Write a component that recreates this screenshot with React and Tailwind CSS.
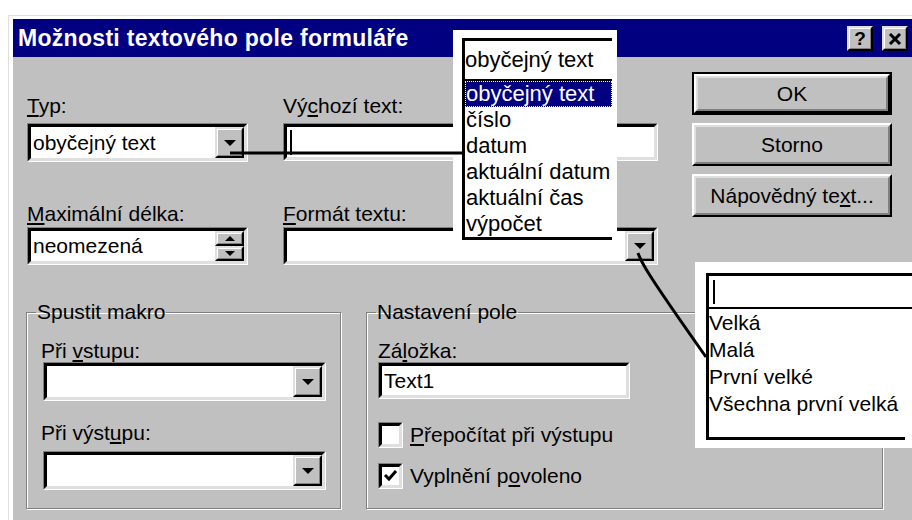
import React from "react";

const FONT = "font-['Liberation_Sans',Arial,sans-serif]";

// Sunken white edit area (Win9x style field border)
function Sunken({ className = "", innerClassName = "", children }) {
  return (
    <div className={`border border-t-[#808080] border-l-[#808080] border-b-white border-r-white ${className}`}>
      <div
        className={`h-full border-[3px] border-t-black border-l-black border-b-[#dfdfdf] border-r-[#dfdfdf] bg-white ${innerClassName}`}
      >
        {children}
      </div>
    </div>
  );
}

// Small raised bevel used for combo / spin / caption buttons
function Raised({ className = "", children }) {
  return (
    <div className={`border-2 border-t-[#dfdfdf] border-l-[#dfdfdf] border-b-black border-r-black bg-[#c0c0c0] ${className}`}>
      <div className="h-full border border-t-white border-l-white border-b-[#808080] border-r-[#808080] flex items-center justify-center">
        {children}
      </div>
    </div>
  );
}

function ArrowDown() {
  return <div className="w-0 h-0 border-l-[6px] border-r-[6px] border-t-[6px] border-l-transparent border-r-transparent border-t-black" />;
}

function ArrowUpSmall() {
  return <div className="w-0 h-0 border-l-[5px] border-r-[5px] border-b-[5px] border-l-transparent border-r-transparent border-b-black" />;
}

function ArrowDownSmall() {
  return <div className="w-0 h-0 border-l-[5px] border-r-[5px] border-t-[5px] border-l-transparent border-r-transparent border-t-black" />;
}

function Combo({ className = "", text }) {
  return (
    <Sunken className={className} innerClassName="flex items-stretch">
      <div className="flex-1 flex items-center pl-[2px] text-[21px] leading-[22px] whitespace-nowrap">{text}</div>
      <Raised className="w-[29px]">
        <ArrowDown />
      </Raised>
    </Sunken>
  );
}

function PushButton({ isDefault = false, children }) {
  const face = (
    <div className="h-full border-2 border-t-white border-l-white border-b-black border-r-black">
      <div className="h-full border-2 border-t-[#dfdfdf] border-l-[#dfdfdf] border-b-[#808080] border-r-[#808080] flex items-center justify-center text-[21px] leading-[22px]">
        {children}
      </div>
    </div>
  );
  return isDefault ? (
    <div className="h-[43px] border-2 border-black">{face}</div>
  ) : (
    <div className="h-[43px]">{face}</div>
  );
}

function Label({ className = "", children }) {
  return <div className={`text-[21px] leading-[22px] whitespace-nowrap ${className}`}>{children}</div>;
}

function CheckBox({ checked }) {
  return (
    <Sunken className="w-[25px] h-[26px]" innerClassName="flex items-center justify-center">
      {checked && (
        <svg width="15" height="14" viewBox="0 0 15 14">
          <path d="M2 6 L6 10 L13 2" fill="none" stroke="black" strokeWidth="3" />
        </svg>
      )}
    </Sunken>
  );
}

function GroupBox({ title, className = "", children }) {
  return (
    <fieldset
      className={`border border-[#808080] shadow-[inset_1px_1px_0_#fff,1px_1px_0_#fff] ${className}`}
    >
      <legend className="ml-[9px] px-[1px] text-[21px] leading-[22px]">{title}</legend>
      {children}
    </fieldset>
  );
}

export default function App() {
  return (
    <div className={`relative w-[912px] h-[520px] overflow-hidden bg-white text-black ${FONT}`}>
      {/* dialog window */}
      <div className="ml-[8px] mt-[15px] w-[906px] h-[520px] border-t border-l border-[#dfdfdf]">
        <div className="h-full border-t-[3px] border-l-[4px] border-white bg-[#c0c0c0]">
          {/* caption */}
          <div className="h-[38px] bg-[#000080] flex items-center justify-between pl-[5px] pr-[6px]">
            <div className="text-white font-bold text-[23px] tracking-[0.3px] leading-[26px] whitespace-nowrap">
              Možnosti textového pole formuláře
            </div>
            <div className="flex gap-[9px] pt-[1px]">
              <Raised className="w-[26px] h-[25px]">
                <span className="font-bold text-[19px] leading-[19px]">?</span>
              </Raised>
              <Raised className="w-[26px] h-[25px]">
                <svg width="14" height="12" viewBox="0 0 14 12">
                  <path d="M2 1 L12 11 M12 1 L2 11" stroke="black" strokeWidth="3" />
                </svg>
              </Raised>
            </div>
          </div>

          {/* upper area: fields + command buttons */}
          <div className="flex pt-[15px]">
            <div className="w-[679px] pl-[14px] pt-[23px]">
              <div className="flex gap-[35px]">
                <div className="w-[221px]">
                  <Label className="mb-[6px]">
                    <u>T</u>yp:
                  </Label>
                  <Combo className="h-[39px]" text="obyčejný text" />
                </div>
                <div className="w-[375px]">
                  <Label className="mb-[6px]">
                    Vý<u>c</u>hozí text:
                  </Label>
                  <Sunken className="h-[38px]" innerClassName="flex items-center pl-[3px]">
                    <div className="w-[2px] h-[25px] bg-black" />
                  </Sunken>
                </div>
              </div>
              <div className="flex gap-[35px] mt-[41px]">
                <div className="w-[221px]">
                  <Label className="mb-[2px]">
                    <u>M</u>aximální délka:
                  </Label>
                  <Sunken className="h-[38px]" innerClassName="flex items-stretch">
                    <div className="flex-1 flex items-center pl-[2px] text-[21px] leading-[22px]">neomezená</div>
                    <div className="w-[29px] flex flex-col">
                      <Raised className="flex-1">
                        <ArrowUpSmall />
                      </Raised>
                      <Raised className="flex-1">
                        <ArrowDownSmall />
                      </Raised>
                    </div>
                  </Sunken>
                </div>
                <div className="w-[375px]">
                  <Label className="mb-[2px]">
                    <u>F</u>ormát textu:
                  </Label>
                  <Combo className="h-[38px]" text="" />
                </div>
              </div>
            </div>
            <div className="w-[200px] flex flex-col gap-[8px]">
              <PushButton isDefault>OK</PushButton>
              <PushButton>Storno</PushButton>
              <PushButton>
                Nápovědný te<u>x</u>t...
              </PushButton>
            </div>
          </div>

          {/* group boxes */}
          <div className="flex gap-[25px] pl-[13px] mt-[36px]">
            <GroupBox title="Spustit makro" className="w-[315px] h-[208px]">
              <div className="pl-[14px] pr-[14px] pt-[17px]">
                <Label>
                  Při <u>v</u>stupu:
                </Label>
                <Combo className="h-[39px] ml-[2px]" text="" />
                <Label className="mt-[21px] mb-[7px]">
                  Při výst<u>u</u>pu:
                </Label>
                <Combo className="h-[39px] ml-[2px]" text="" />
              </div>
            </GroupBox>
            <GroupBox title="Nastavení pole" className="w-[517px] h-[208px]">
              <div className="pl-[11px] pt-[17px]">
                <Label>
                  Zá<u>l</u>ožka:
                </Label>
                <Sunken className="h-[37px] w-[252px]" innerClassName="flex items-center pl-[2px]">
                  <span className="text-[21px] leading-[22px]">Text1</span>
                </Sunken>
                <div className="flex items-center gap-[7px] mt-[23px]">
                  <CheckBox />
                  <Label>
                    <u>P</u>řepočítat při výstupu
                  </Label>
                </div>
                <div className="flex items-center gap-[7px] mt-[15px]">
                  <CheckBox checked />
                  <Label>
                    Vyplnění p<u>o</u>voleno
                  </Label>
                </div>
              </div>
            </GroupBox>
          </div>
        </div>
      </div>

      {/* dropped list of the "Typ" combo, shown as a callout */}
      <div className="absolute left-[453px] top-[30px] w-[164px] h-[210px] bg-white pl-[9px] pt-[8px] text-[22px] leading-[22px]">
        <div className="w-[150px] h-[41px] border-t-[3px] border-l-[3px] border-black flex items-center">
          obyčejný text
        </div>
        <div className="w-[150px] border-t-2 border-l-[3px] border-b-[3px] border-black">
          <div className="h-[26px] bg-[#000080] text-white border border-dotted border-[#ffffc0] flex items-center">
            obyčejný text
          </div>
          {["číslo", "datum", "aktuální datum", "aktuální čas", "výpočet"].map((t) => (
            <div key={t} className="h-[26px] flex items-center pl-[1px] whitespace-nowrap">
              {t}
            </div>
          ))}
        </div>
      </div>

      {/* dropped list of the "Formát textu" combo */}
      <div className="absolute left-[695px] top-[262px] w-[217px] h-[186px] bg-white pl-[11px] pt-[11px] text-[21px] leading-[22px]">
        <div className="h-[34px] border-t-[3px] border-l-[3px] border-black flex items-center pl-[4px]">
          <div className="w-[2px] h-[24px] bg-black" />
        </div>
        <div className="border-t-2 border-l-[3px] border-black">
          {["Velká", "Malá", "První velké", "Všechna první velká"].map((t) => (
            <div key={t} className="h-[27px] flex items-center whitespace-nowrap">
              {t}
            </div>
          ))}
          <div className="h-[20px]" />
        </div>
        <div className="w-[199px] h-[3px] bg-black" />
      </div>

      {/* connector lines */}
      <svg className="absolute inset-0 pointer-events-none" width="912" height="520">
        <path d="M230 153 H463" stroke="black" strokeWidth="3" fill="none" />
        <path d="M638 253 C641 262 646 272 706 357" stroke="black" strokeWidth="3" fill="none" />
      </svg>
    </div>
  );
}
